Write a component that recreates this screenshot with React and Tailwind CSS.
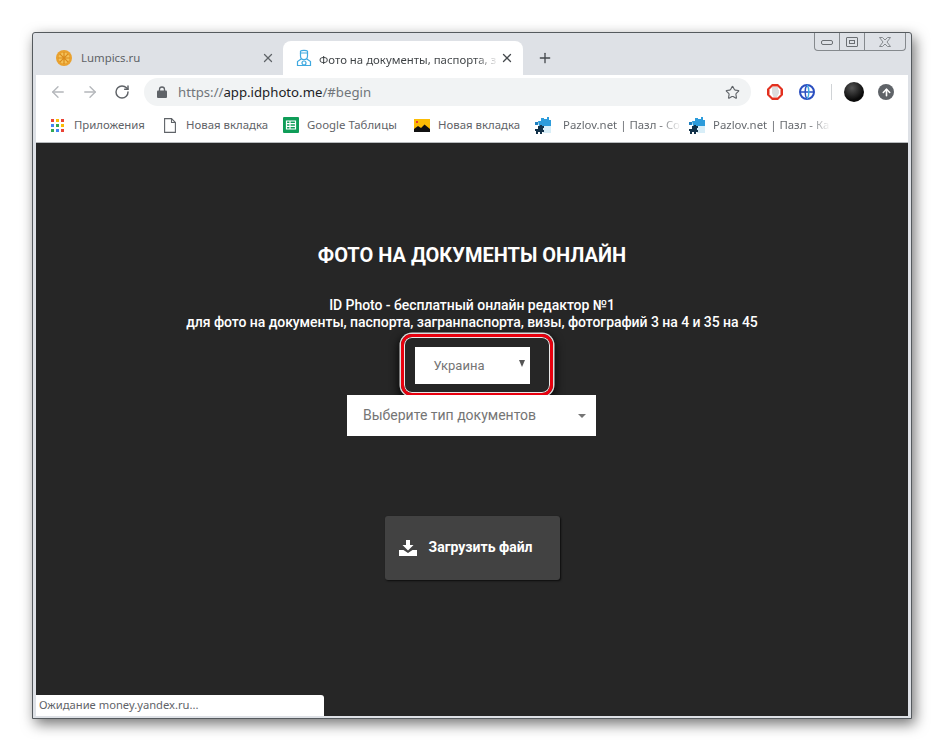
import { ArrowLeft, ArrowRight, RotateCw, Star, Plus, X, ArrowUp } from 'lucide-react';

const uiFont = "font-['Noto_Sans','Open_Sans',sans-serif]";

function LumpicsIcon() {
	return (
		<svg width="16" height="16" viewBox="0 0 16 16">
			<circle cx="8" cy="8" r="8" fill="#e9a12f" />
			<circle cx="8" cy="8" r="5.500" fill="#f4c25a" />
			<path d="M8 2v12M2 8h12M3.800 3.800l8.400 8.400M12.200 3.800l-8.400 8.400" stroke="#d98a1c" strokeWidth="1.200" />
		</svg>
	);
}

function PersonIcon() {
	return (
		<svg className="shrink-0" width="16" height="18" viewBox="0 0 16 18" fill="none" stroke="#3fa9e0" strokeWidth="1.200">
			<path d="M4.500 4V2.200C5.500 1 10.500 1 11.500 2.200V4z" />
			<path d="M4.500 4v3c0 2.200 1.500 3.600 3.500 3.600s3.500-1.400 3.500-3.600V4" />
			<path d="M5.200 10L1.500 12.500V16.500H14.500V12.500L10.800 10" />
			<circle cx="8" cy="14" r="2" />
		</svg>
	);
}

function AppsIcon() {
	const colors = ['#ea4335', '#fbbc05', '#ea4335', '#4285f4', '#34a853', '#fbbc05', '#34a853', '#4285f4', '#ea4335'];
	return (
		<div className="grid grid-cols-3 gap-[2px] w-[13px] h-[13px]">
			{colors.map((c, i) => (
				<svg key={i} width="3" height="3" viewBox="0 0 3 3"><rect width="3" height="3" fill={c} /></svg>
			))}
		</div>
	);
}

function DocIcon() {
	return (
		<svg width="12" height="15" viewBox="0 0 12 15" fill="none" stroke="#5f6368" strokeWidth="1.100">
			<path d="M.6.6H7.500L11.400 4.500V14.400H.6z" />
			<path d="M7.500.6V4.500H11.400" />
		</svg>
	);
}

function SheetsIcon() {
	return (
		<svg width="16" height="16" viewBox="0 0 16 16">
			<rect width="16" height="16" rx="1" fill="#0f9d58" />
			<path d="M3.500 4H12.500V12H3.500zM3.500 6.700H12.500M3.500 9.300H12.500M7 4V12" fill="none" stroke="#fff" strokeWidth="1.200" />
		</svg>
	);
}

function ImageIcon() {
	return (
		<svg width="16" height="13" viewBox="0 0 16 13">
			<rect width="16" height="13" fill="#fbbc05" />
			<rect x="2" y="2" width="2" height="2" fill="#e53935" />
			<path d="M0 13V10L4 7 7 9 10.500 5.500 16 10V13z" fill="#111" />
		</svg>
	);
}

function PuzzleIcon() {
	return (
		<svg width="16" height="17" viewBox="0 0 16 17">
			<path d="M3 4H6V1H9V2H12V0H14V3H16V9H4z" fill="#2d9cdb" />
			<rect x="8" y="9" width="8" height="7" fill="#d8eef8" />
			<path d="M0 5h3v3H0z" fill="#1d7fc0" />
			<path d="M3 9h2V8h2v1h2v2H8v2h1v2H7v2H5v-2H3v2H1v-3H0v-2h3z" fill="#12324a" />
		</svg>
	);
}

function Bookmark({ icon, label, fade, className }) {
	return (
		<div className={`flex items-center ${className}`}>
			<div className="flex justify-center shrink-0">{icon}</div>
			{fade ? (
				<span className="whitespace-nowrap pb-[2px] text-[11.4px] text-transparent bg-clip-text bg-linear-to-r from-[#5f6368] from-82% to-[#f4f4f4]">
					{label}
				</span>
			) : (
				<span className="whitespace-nowrap pb-[2px] text-[11.4px] text-[#5f6368]">{label}</span>
			)}
		</div>
	);
}

export default function App() {
	return (
		<div className="w-[944px] h-[752px] bg-white pt-[32px] pl-[32px]">
			<div className={`relative w-[880px] h-[687px] flex flex-col bg-[#dee1e6] border border-[#555a5e] rounded-t-[3px] pl-[3px] pr-[3px] pb-[2px] shadow-[3px_5px_14px_rgba(0,0,0,0.55)] ${uiFont}`}>
				{/* Window buttons */}
				<div className="absolute top-0 right-[5px] w-[92px] h-[18px] flex border border-t-0 border-[#85898d] rounded-b-[4px]">
					<div className="w-[25px] border-r border-[#85898d] flex items-center justify-center">
						<div className="w-[12px] h-[5px] mt-[2px] border border-[#6b6f73] rounded-[2px]"></div>
					</div>
					<div className="w-[25px] border-r border-[#85898d] flex items-center justify-center">
						<div className="w-[12px] h-[10px] border border-[#6b6f73] rounded-[1px] flex items-center justify-center">
							<div className="w-[6px] h-[4px] border border-[#6b6f73]"></div>
						</div>
					</div>
					<div className="flex-1 flex items-center justify-center">
						<svg width="12" height="10" viewBox="0 0 12 10" fill="none" stroke="#85898d" strokeWidth="1">
							<path d="M.5.5H3.500L6 3 8.500.5H11.500L8 5 11.500 9.500H8.500L6 7 3.500 9.500H.5L4 5z" />
						</svg>
					</div>
				</div>

				{/* Tabs */}
				<div className="h-[42px] flex items-end shrink-0">
					<div className="w-[247px] h-[34px] flex items-center pl-[20px] pr-[8px] gap-[9px]">
						<LumpicsIcon />
						<span className="flex-1 text-[11.4px] text-[#5f6368]">Lumpics.ru</span>
						<X size={14} strokeWidth={2.2} className="text-[#5f6368]" />
					</div>
					<div className="w-[240px] h-[34px] flex items-center bg-white rounded-t-[8px] pl-[13px] pr-[9px] gap-[7px]">
						<PersonIcon />
						<div className="flex-1 min-w-0">
							<span className="whitespace-nowrap text-[11.4px] text-transparent bg-clip-text bg-linear-to-r from-[#3c4043] from-88% to-[#e8e8e8]">
								Фото на документы, паспорта, з
							</span>
						</div>
						<X size={14} strokeWidth={2.2} className="text-[#45494d] shrink-0" />
					</div>
					<div className="h-[34px] flex items-center ml-[14px]">
						<Plus size={16} strokeWidth={2} className="text-[#45494d]" />
					</div>
				</div>

				{/* Toolbar */}
				<div className="h-[34px] bg-white flex items-center shrink-0 pl-[13px]">
					<ArrowLeft size={18} strokeWidth={1.8} className="text-[#b4b7bb]" />
					<ArrowRight size={18} strokeWidth={1.8} className="text-[#b4b7bb] ml-[14px]" />
					<RotateCw size={16} strokeWidth={2.2} className="text-[#5f6368] ml-[15px]" />
					<div className="w-[607px] h-[28px] ml-[14px] rounded-full bg-[#f1f3f4] flex items-center pl-[13px] pr-[11px]">
						<svg width="10" height="12" viewBox="0 0 10 12">
							<path d="M2.500 5V3.500a2.500 2.500 0 0 1 5 0V5" fill="none" stroke="#5f6368" strokeWidth="1.300" />
							<rect y="4.500" width="10" height="7.500" rx="1" fill="#5f6368" />
						</svg>
						<span className="flex-1 ml-[11px] pt-[1px] text-[13.2px] text-[#70757a]">
							https://<span className="text-[#202124]">app.idphoto.me</span>/#begin
						</span>
						<Star size={15} strokeWidth={1.8} className="text-[#5f6368]" />
					</div>
					<svg className="ml-[16px]" width="16" height="16" viewBox="0 0 16 16">
						<path d="M5 0h6l5 5v6l-5 5H5l-5-5V5z" fill="#e2301f" />
						<path d="M5.500 2.500h5l3 3v5l-3 3h-5l-3-3v-5z" fill="#fff" />
						<path d="M5 5V3h6v3l1-.5V9l-2 4H6.500L5 9z" fill="#dcdcdc" />
					</svg>
					<svg className="ml-[16px]" width="16" height="16" viewBox="0 0 16 16" fill="none">
						<circle cx="8" cy="8" r="7" stroke="#2b4fc0" strokeWidth="2" />
						<path d="M1 8H15M8 1C5.500 4 5.500 12 8 15" stroke="#2b4fc0" strokeWidth="1.400" />
						<path d="M8 1C10.500 4 10.500 12 8 15" stroke="#3fa9e0" strokeWidth="1.400" />
					</svg>
					<div className="w-px h-[16px] bg-[#d0d3d6] ml-[16px]"></div>
					<div className="w-[20px] h-[20px] rounded-full ml-[12px] bg-[radial-gradient(circle_at_40%_30%,#555,#0a0a0a_65%)]"></div>
					<div className="w-[16px] h-[16px] rounded-full ml-[14px] bg-[#5f6368] flex items-center justify-center">
						<ArrowUp size={11} strokeWidth={3.5} className="text-white" />
					</div>
				</div>

				{/* Bookmarks */}
				<div className="h-[34px] bg-white border-b border-[#b8bbbe] flex items-center shrink-0 pl-[15px]">
					<Bookmark icon={<AppsIcon />} label="Приложения" className="w-[113px] gap-[10px]" />
					<Bookmark icon={<DocIcon />} label="Новая вкладка" className="w-[119px] gap-[10px]" />
					<Bookmark icon={<SheetsIcon />} label="Google Таблицы" className="w-[131px] gap-[8px]" />
					<Bookmark icon={<ImageIcon />} label="Новая вкладка" className="w-[121px] gap-[8px]" />
					<Bookmark icon={<PuzzleIcon />} label="Pazlov.net | Пазл - Co" fade className="w-[154px] gap-[12px]" />
					<Bookmark icon={<PuzzleIcon />} label="Pazlov.net | Пазл - Ка" fade className="w-[141px] gap-[8px]" />
				</div>

				{/* Page */}
				<div className="relative flex-1 bg-[#262626] flex flex-col items-center font-['Roboto',sans-serif] text-white">
					<h1 className="mt-[100px] text-[20px] leading-[24px] font-bold">ФОТО НА ДОКУМЕНТЫ ОНЛАЙН</h1>
					<p className="mt-[30px] text-[14px] leading-[17px] font-medium text-center tracking-[-0.05px]">
						ID Photo - бесплатный онлайн редактор №1
						<br />
						для фото на документы, паспорта, загранпаспорта, визы, фотографий 3 на 4 и 35 на 45
					</p>
					<div className="relative mt-[16px] w-[115px] h-[37px] bg-white flex items-center pl-[19px] text-[13px] text-[#757575]">
						Украина
						<span className="absolute right-[5px] top-[13px] w-0 h-0 border-l-[3.5px] border-r-[3.5px] border-t-[7px] border-l-transparent border-r-transparent border-t-[#555]"></span>
						{/* Red highlight */}
						<div className="absolute left-[-14px] top-[-13px] w-[152px] h-[62px] border-[3.5px] border-[#e8000e] rounded-[11px] shadow-[0_0_0_1.5px_#dcdcdc,inset_0_0_0_1px_#e8e8e8,0_4px_8px_3px_rgba(0,0,0,0.75)]"></div>
					</div>
					<div className="relative mt-[11px] ml-[-1px] w-[249px] h-[41px] bg-white flex items-center pl-[16px] text-[14px] text-[#757575]">
						Выберите тип документов
						<span className="absolute right-[10px] top-[19px] w-0 h-0 border-l-[4px] border-r-[4px] border-t-[4px] border-l-transparent border-r-transparent border-t-[#757575]"></span>
					</div>
					<button className="mt-[80px] w-[175px] h-[64px] bg-[#424242] rounded-[3px] flex items-center pl-[14px] pb-[1px] gap-[12px] text-[14px] font-bold text-white shadow-[1px_1px_2px_rgba(0,0,0,0.7)]">
						<svg width="18" height="16" viewBox="0 0 18 16">
							<path d="M7 0h4v5h3.500L9 10.500 3.500 5H7z" fill="#fff" />
							<path d="M0 10h4.500L9 13l4.500-3H18v6H0z" fill="#fff" />
						</svg>
						Загрузить файл
					</button>

					{/* Status bubble */}
					<div className={`absolute left-0 bottom-0 w-[288px] h-[21px] bg-white rounded-tr-[3px] flex items-center pl-[3px] text-[11.2px] text-[#5f6368] ${uiFont}`}>
						Ожидание money.yandex.ru...
					</div>
				</div>
			</div>
		</div>
	);
}
